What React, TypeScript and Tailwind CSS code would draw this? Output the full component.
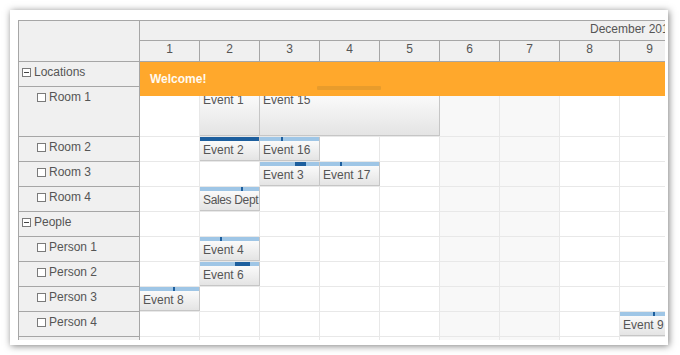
import React from "react";

type Row = { name: string; group?: boolean; h: number };

const rows: Row[] = [
  { name: "Locations", group: true, h: 25 },
  { name: "Room 1", h: 50 },
  { name: "Room 2", h: 25 },
  { name: "Room 3", h: 25 },
  { name: "Room 4", h: 25 },
  { name: "People", group: true, h: 25 },
  { name: "Person 1", h: 25 },
  { name: "Person 2", h: 25 },
  { name: "Person 3", h: 25 },
  { name: "Person 4", h: 25 },
  { name: "", h: 25 },
];

type Ev = {
  row: number;
  text: string;
  left: number;
  width: number;
  tight?: boolean;
  marks: { l: number; w: number }[];
};

const events: Ev[] = [
  { row: 1, text: "Event 1", left: 60, width: 60, marks: [] },
  { row: 1, text: "Event 15", left: 120, width: 180, marks: [] },
  { row: 2, text: "Event 2", left: 60, width: 60, marks: [{ l: 0, w: 60 }] },
  { row: 2, text: "Event 16", left: 120, width: 60, marks: [{ l: 21, w: 2 }] },
  { row: 3, text: "Event 3", left: 120, width: 60, marks: [{ l: 35, w: 11 }] },
  { row: 3, text: "Event 17", left: 180, width: 60, marks: [{ l: 20, w: 2 }] },
  { row: 4, text: "Sales Dept", left: 60, width: 60, tight: true, marks: [{ l: 41, w: 2 }] },
  { row: 6, text: "Event 4", left: 60, width: 60, marks: [{ l: 20, w: 2 }] },
  { row: 7, text: "Event 6", left: 60, width: 60, marks: [{ l: 35, w: 15 }] },
  { row: 8, text: "Event 8", left: 0, width: 60, marks: [{ l: 33, w: 2 }] },
  { row: 9, text: "Event 9", left: 480, width: 60, marks: [{ l: 33, w: 2 }] },
];

const days = [1, 2, 3, 4, 5, 6, 7, 8, 9];

function GroupIcon() {
  return (
    <span className="relative inline-block w-[9px] h-[9px] border border-[#7a7a7a] bg-white shrink-0">
      <span className="absolute left-[1px] top-[3px] w-[5px] h-[1px] bg-[#444]" />
    </span>
  );
}

function BoxIcon() {
  return <span className="inline-block w-[9px] h-[9px] border border-[#7a7a7a] bg-white shrink-0" />;
}

function EventBox({ ev }: { ev: Ev }) {
  return (
    <div
      className="absolute top-0 bottom-0 flex flex-col border-r border-b border-[#c6c6c6] bg-linear-to-b from-white to-[#e4e4e4] overflow-hidden"
      style={{ left: ev.left, width: ev.width }}
    >
      <div className="relative h-[4px] w-full bg-[#9fc6e6] shrink-0">
        {ev.marks.map((m, i) => (
          <div
            key={i}
            className="absolute top-0 h-[4px] bg-[#1d5f9e]"
            style={{ left: m.l, width: m.w }}
          />
        ))}
      </div>
      <div
        className={`pl-[3px] pt-[2px] leading-[15px] whitespace-nowrap text-[#555] ${
          ev.tight ? "tracking-[-0.35px]" : ""
        }`}
      >
        {ev.text}
      </div>
    </div>
  );
}

export default function App() {
  return (
    <div
      className="w-[680px] h-[355px] bg-white overflow-hidden pt-[10px] pl-[10px] text-[12px]"
      style={{ fontFamily: '"Liberation Sans", Arial, sans-serif' }}
    >
      <div className="w-[658px] h-[335px] bg-white shadow-[1px_1px_7px_rgba(0,0,0,0.5)] pt-[10px] pl-[8px]">
        <div className="w-[647px] h-[320px] overflow-hidden">
          <div className="flex border-t border-[#a6a6a6] w-max">
            {/* Row headers */}
            <div className="w-[122px] shrink-0 border-l border-r border-[#a6a6a6] bg-[#f0f0f0] text-[#555]">
              <div className="h-[41px] border-b border-[#a6a6a6]" />
              {rows.map((r, i) => (
                <div key={i} className="border-b border-[#a6a6a6] box-border" style={{ height: r.h }}>
                  {r.name && (
                    <div
                      className={`flex items-center pt-[3px] leading-[15px] gap-[3px] ${
                        r.group ? "pl-[3px]" : "pl-[18px]"
                      }`}
                    >
                      {r.group ? <GroupIcon /> : <BoxIcon />}
                      <span>{r.name}</span>
                    </div>
                  )}
                </div>
              ))}
            </div>

            {/* Time header + grid */}
            <div className="w-[540px] shrink-0">
              <div className="h-[20px] border-b border-[#a6a6a6] bg-[#f0f0f0] relative text-[#555] overflow-hidden">
                <span className="absolute left-[450px] top-[1px] leading-[15px] whitespace-nowrap">
                  December 2014
                </span>
              </div>
              <div className="h-[21px] border-b border-[#a6a6a6] bg-[#f0f0f0] flex text-[#555]">
                {days.map((d) => (
                  <div
                    key={d}
                    className="w-[60px] h-full border-r border-[#a6a6a6] text-center pt-[1px] leading-[15px]"
                  >
                    {d}
                  </div>
                ))}
              </div>

              <div className="relative">
                {rows.map((r, ri) => (
                  <div key={ri} className="relative flex border-b border-[#e8e8e8]" style={{ height: r.h }}>
                    {days.map((d, di) => (
                      <div
                        key={d}
                        className={`w-[60px] h-full border-r border-[#e8e8e8] ${
                          di === 5 || di === 6 ? "bg-[#f8f8f8]" : "bg-white"
                        }`}
                      />
                    ))}
                    {events
                      .filter((e) => e.row === ri)
                      .map((e, i) => (
                        <EventBox key={i} ev={e} />
                      ))}
                  </div>
                ))}

                {/* Welcome banner */}
                <div className="absolute left-0 top-0 w-full h-[34px] bg-[#ffa82c] flex items-center pl-[10px]">
                  <span className="font-bold text-[#fffaf0]">Welcome!</span>
                  <div className="absolute left-[177px] top-[24px] w-[64px] h-[4px] bg-[#e89c2c] rounded-[1px]" />
                </div>
              </div>
            </div>
          </div>
        </div>
      </div>
    </div>
  );
}
